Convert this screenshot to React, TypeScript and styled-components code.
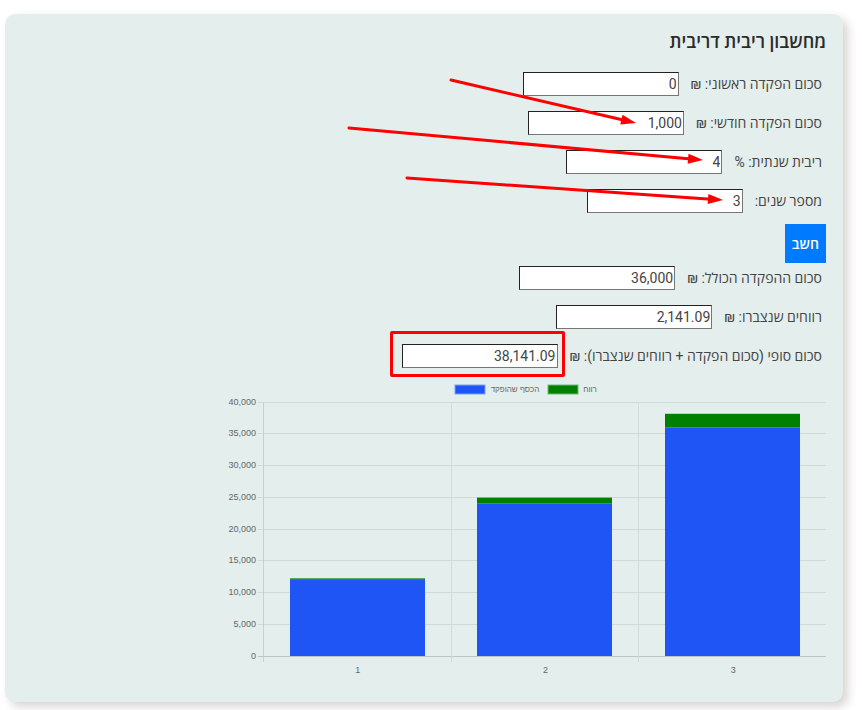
import React from 'react';
import styled, { createGlobalStyle } from 'styled-components';

interface Field {
  id: string;
  label: string;
  value: string;
  highlighted?: boolean;
}

interface YearTotal {
  year: number;
  deposited: number;
  profit: number;
}

const GlobalStyle = createGlobalStyle`
  body {
    margin: 0;
    background: #ffffff;
    font-family: Roboto, 'Open Sans', 'Noto Sans', sans-serif;
    color: #444444;
  }

  * {
    box-sizing: border-box;
  }
`;

const Page = styled.main`
  padding: 14px 19px 8px 5px;
`;

const Card = styled.section`
  position: relative;
  padding: 16px 17px 21px;
  border-radius: 10px;
  background: #e4eeec;
  box-shadow: 5px 5px 10px rgba(70, 40, 40, 0.2);
`;

const Title = styled.h1`
  margin: 0 0 18px;
  font-size: 18px;
  line-height: 24px;
  font-weight: 600;
  color: #2b2b2b;
`;

const FieldList = styled.div`
  display: flex;
  flex-direction: column;
  gap: 15px;
`;

const FieldRow = styled.div`
  display: flex;
  align-items: center;
  gap: 12px;
  padding-right: 4px;
`;

const FieldLabel = styled.label`
  font-size: 14px;
  line-height: 24px;
  white-space: nowrap;
`;

const InputWrap = styled.span`
  position: relative;
  display: flex;
`;

const NumberInput = styled.input`
  width: 156px;
  height: 24px;
  padding: 0 1px;
  border: 1px solid;
  border-color: #222222 #767676 #767676 #222222;
  border-radius: 0;
  background: #ffffff;
  color: #444444;
  font-family: inherit;
  font-size: 14px;
  text-align: right;
`;

const Highlight = styled.span`
  position: absolute;
  inset: -13px -7px -9px -12px;
  border: 3px solid #ff0000;
  border-radius: 2px;
  pointer-events: none;
`;

const CalcButton = styled.button`
  display: block;
  height: 39px;
  margin: 11px 0 3px;
  padding: 0 7px;
  border: none;
  background: #007bff;
  color: #ffffff;
  font-family: inherit;
  font-size: 14px;
  font-weight: 600;
  cursor: pointer;
`;

const Arrows = styled.svg`
  position: absolute;
  top: 50px;
  right: 99px;
  width: 400px;
  height: 150px;
  pointer-events: none;
`;

const ChartSvg = styled.svg`
  display: block;
  width: 75%;
  max-width: 600px;
  min-width: 300px;
  margin-top: 13px;
  font-family: 'Liberation Sans', Arial, sans-serif;
`;

const inputs: Field[] = [
  { id: 'initial', label: 'סכום הפקדה ראשוני: ₪', value: '0' },
  { id: 'monthly', label: 'סכום הפקדה חודשי: ₪', value: '1,000' },
  { id: 'rate', label: 'ריבית שנתית: %', value: '4' },
  { id: 'years', label: 'מספר שנים:', value: '3' },
];

const results: Field[] = [
  { id: 'deposits', label: 'סכום ההפקדה הכולל: ₪', value: '36,000' },
  { id: 'profit', label: 'רווחים שנצברו: ₪', value: '2,141.09' },
  {
    id: 'total',
    label: 'סכום סופי (סכום הפקדה + רווחים שנצברו): ₪',
    value: '38,141.09',
    highlighted: true,
  },
];

const totals: YearTotal[] = [
  { year: 1, deposited: 12000, profit: 222 },
  { year: 2, deposited: 24000, profit: 943 },
  { year: 3, deposited: 36000, profit: 2141 },
];

const arrows = [
  { from: [107, 16], to: [292, 59] },
  { from: [5, 64], to: [359, 96] },
  { from: [63, 114], to: [379, 136] },
];

const ticks = [0, 5000, 10000, 15000, 20000, 25000, 30000, 35000, 40000];

const PLOT = { left: 37, right: 600, top: 21, bottom: 275 };
const BAR_WIDTH = 135;

const yFor = (value: number) =>
  PLOT.bottom - (value / 40000) * (PLOT.bottom - PLOT.top);

const FieldGroup: React.FC<{ fields: Field[]; readOnly?: boolean }> = ({ fields, readOnly }) => (
  <FieldList>
    {fields.map(field => (
      <FieldRow key={field.id}>
        <FieldLabel htmlFor={field.id}>{field.label}</FieldLabel>
        <InputWrap>
          <NumberInput id={field.id} type="text" defaultValue={field.value} readOnly={readOnly} />
          {field.highlighted && <Highlight />}
        </InputWrap>
      </FieldRow>
    ))}
  </FieldList>
);

const PointerArrows: React.FC = () => (
  <Arrows viewBox="0 0 400 150" aria-hidden="true">
    {arrows.map(({ from, to }) => {
      const angle = Math.atan2(to[1] - from[1], to[0] - from[0]);
      const length = Math.hypot(to[0] - from[0], to[1] - from[1]);
      return (
        <g
          key={from[0]}
          transform={`translate(${from[0]} ${from[1]}) rotate(${(angle * 180) / Math.PI})`}
        >
          <line x2={length - 12} stroke="#ff0000" strokeWidth="3" strokeLinecap="round" />
          <path d={`M${length} 0l-15 -5v10z`} fill="#ff0000" />
        </g>
      );
    })}
  </Arrows>
);

const BalanceChart: React.FC = () => {
  const step = (PLOT.right - PLOT.left) / totals.length;

  return (
    <ChartSvg viewBox="0 0 600 300" direction="ltr" role="img">
      <rect x="229" y="4" width="30" height="9" fill="#1f55f5" stroke="#7f9ff2" />
      <text x="289" y="11" fontSize="8" fill="#666666" textAnchor="middle">הכסף שהופקד</text>
      <rect x="322" y="4" width="30" height="9" fill="#008000" stroke="#72b676" />
      <text x="364" y="11" fontSize="8" fill="#666666" textAnchor="middle">רווח</text>

      {ticks.map(tick => {
        const y = Math.floor(yFor(tick)) + 0.5;
        return (
          <g key={tick}>
            <line
              x1={PLOT.left - 5}
              x2={PLOT.right}
              y1={y}
              y2={y}
              stroke={tick === 0 ? '#bcc5c4' : '#d1dad8'}
            />
            <text x="30" y={y + 2} fontSize="9" fill="#666666" textAnchor="end">
              {tick.toLocaleString('en-US')}
            </text>
          </g>
        );
      })}

      {totals.map(({ year, deposited, profit }, index) => {
        const start = PLOT.left + step * index;
        const center = start + step / 2;
        const barX = Math.ceil(center - BAR_WIDTH / 2);
        return (
          <g key={year}>
            <line
              x1={Math.round(start) + 0.5}
              x2={Math.round(start) + 0.5}
              y1={PLOT.top}
              y2={PLOT.bottom + 6}
              stroke={index === 0 ? '#c8d1cf' : '#d4dcdb'}
            />
            <rect
              x={barX}
              y={yFor(deposited)}
              width={BAR_WIDTH}
              height={PLOT.bottom - yFor(deposited)}
              fill="#1f55f5"
            />
            <rect
              x={barX}
              y={yFor(deposited + profit)}
              width={BAR_WIDTH}
              height={yFor(deposited) - yFor(deposited + profit)}
              fill="#008000"
            />
            <text x={center + 1} y="292" fontSize="9" fill="#666666" textAnchor="middle">
              {year}
            </text>
          </g>
        );
      })}
    </ChartSvg>
  );
};

const App: React.FC = () => (
  <Page dir="rtl" lang="he">
    <GlobalStyle />
    <Card>
      <Title>מחשבון ריבית דריבית</Title>
      <FieldGroup fields={inputs} />
      <CalcButton type="button">חשב</CalcButton>
      <FieldGroup fields={results} readOnly />
      <BalanceChart />
      <PointerArrows />
    </Card>
  </Page>
);

export default App;
